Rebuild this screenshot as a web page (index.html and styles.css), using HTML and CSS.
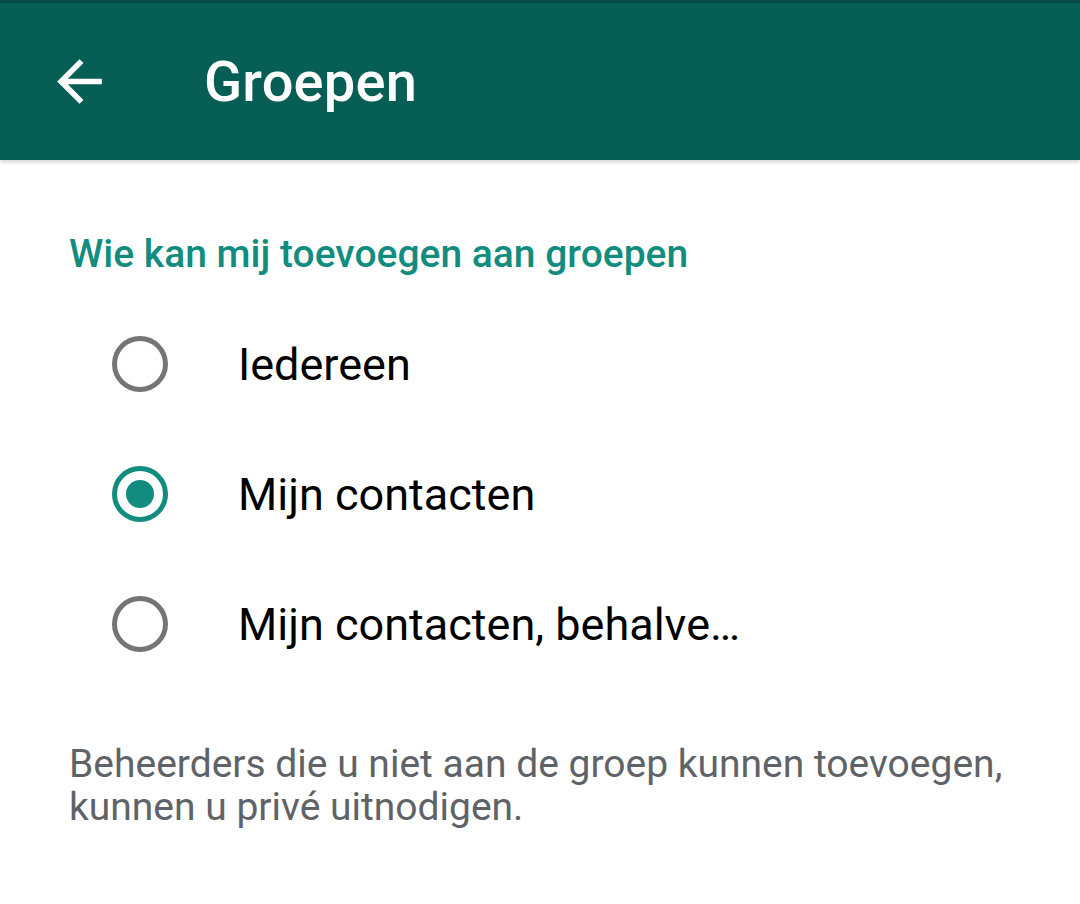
FILE: index.html
```html
<!DOCTYPE html>
<html lang="nl">
<head>
  <meta charset="UTF-8" />
  <title>Groepen</title>
  <link rel="stylesheet" href="styles.css">
</head>
<body>
  <div class="topbar">
    <svg class="back" viewBox="0 0 24 24" width="67" height="67">
      <path d="M20 11H7.83l5.59-5.59L12 4l-8 8 8 8 1.41-1.41L7.83 13H20v-2z" fill="#fff"/>
    </svg>
    <h1>Groepen</h1>
  </div>

  <div class="content">
    <h2>Wie kan mij toevoegen aan groepen</h2>

    <div class="option">
      <span class="radio"></span>
      <span class="label">Iedereen</span>
    </div>
    <div class="option">
      <span class="radio checked"></span>
      <span class="label">Mijn contacten</span>
    </div>
    <div class="option">
      <span class="radio"></span>
      <span class="label">Mijn contacten, behalve…</span>
    </div>

    <p class="note">Beheerders die u niet aan de groep kunnen toevoegen, kunnen u privé uitnodigen.</p>
  </div>
</body>
</html>
```

FILE: styles.css
```css
body {
  margin: 0;
  font-family: Roboto, "Liberation Sans", sans-serif;
  background-color: #fff;
}
.topbar {
  height: 157px;
  border-top: 3px solid #054c44;
  background-color: #075e54;
  display: flex;
  align-items: center;
  box-shadow: 0 2px 4px rgba(0, 0, 0, 0.18);
}
.back {
  margin-left: 46px;
  flex-shrink: 0;
}
h1 {
  margin: 0 0 0 91px;
  color: #fff;
  font-size: 56px;
  font-weight: 500;
  letter-spacing: 0.2px;
}
.content {
  padding: 0 69px;
}
h2 {
  margin: 72px 0 23px;
  font-size: 39px;
  line-height: 44px;
  font-weight: 500;
  color: #128c7e;
}
.option {
  height: 130px;
  display: flex;
  align-items: center;
  padding-left: 43px;
}
.radio {
  width: 46px;
  height: 46px;
  border: 5px solid #757575;
  border-radius: 50%;
  display: flex;
  align-items: center;
  justify-content: center;
  flex-shrink: 0;
}
.radio.checked {
  border-color: #128c7e;
}
.radio.checked::after {
  content: "";
  width: 28px;
  height: 28px;
  border-radius: 50%;
  background-color: #128c7e;
}
.label {
  margin-left: 70px;
  font-size: 45px;
  color: #000;
}
.note {
  margin: 54px 0 0;
  font-size: 39px;
  line-height: 43px;
  color: #5f6368;
  max-width: 950px;
}
```
